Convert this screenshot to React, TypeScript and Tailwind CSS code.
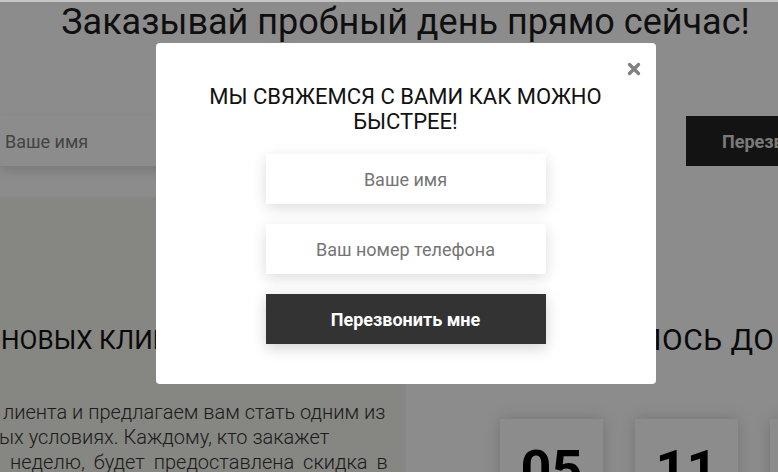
function Counter({ value }: { value: string }) {
  return (
    <div className="h-[200px] w-[103px] bg-white pt-[24px] text-center text-[54px] font-bold leading-[54px] text-black shadow-[0_0_15px_rgba(0,0,0,0.18)]">
      {value}
    </div>
  );
}

function CloseIcon() {
  return (
    <svg width="14" height="14" viewBox="0 0 14 14" className="text-[#808080]">
      <path d="M2.5 2.5 L11.5 11.5 M11.5 2.5 L2.5 11.5" stroke="currentColor" strokeWidth="3.4" strokeLinecap="round" />
    </svg>
  );
}

export default function App() {
  return (
    <div className="relative h-[472px] w-[778px] overflow-hidden bg-white font-['Roboto',sans-serif]">
      <div className="h-[2px] bg-[#c6c6c6]" />
      <div className="relative h-[470px] w-[811px]">
        <h1 className="pt-[1px] text-center text-[36px] leading-[39px] text-[#1c1c1c]">
          Заказывай пробный день прямо сейчас!
        </h1>

        <div className="mt-[74px] flex h-[50px]">
          <div className="flex w-[250px] items-center bg-white pl-[5px] text-[18px] text-[#7a7a7a] shadow-[0_6px_10px_rgba(0,0,0,0.12)]">
            Ваше имя
          </div>
          <div className="flex-1" />
          <div className="flex w-[125px] items-center overflow-hidden whitespace-nowrap bg-[#242424] pl-[36px] text-[18px] font-bold text-[#dedede]">
            Перезвонить мне
          </div>
        </div>

        <div className="mt-[31px] grid h-[275px] grid-cols-[406px_1fr]">
          <div className="overflow-hidden bg-[#f5f5ee] pt-[125px]">
            <h2 className="whitespace-nowrap pl-[1px] text-[26px] uppercase leading-[36px] text-[#111]">
              Новых клиентов
            </h2>
            <div className="mt-[42px] whitespace-nowrap text-[20px] font-light leading-[25px] text-[#333]">
              <div className="pl-[3px]">лиента и предлагаем вам стать одним из</div>
              <div className="-ml-[1px]">ых условиях. Каждому, кто закажет</div>
              <div className="pl-[10px] [word-spacing:4px]">неделю, будет предоставлена скидка в</div>
            </div>
          </div>
          <div className="pt-[125px]">
            <h2 className="ml-[156px] whitespace-nowrap text-[30px] uppercase leading-[36px] tracking-[0.5px] text-[#111]">
              Осталось до конца
            </h2>
            <div className="ml-[94px] mt-[61px] flex gap-[32px]">
              <Counter value="05" />
              <Counter value="11" />
              <Counter value="42" />
            </div>
          </div>
        </div>

        <div className="absolute inset-0 flex justify-center bg-black/45 pt-[41px]">
          <div className="relative h-fit w-[500px] rounded-[4px] bg-white pb-[40px] pt-[41px]">
            <button className="absolute right-[15px] top-[19px] flex h-[14px] w-[14px] items-center justify-center">
              <CloseIcon />
            </button>
            <h3 className="text-center text-[22px] leading-[25px] text-[#111]">
              МЫ СВЯЖЕМСЯ С ВАМИ КАК МОЖНО
              <br />
              БЫСТРЕЕ!
            </h3>
            <div className="mx-auto mt-[20px] flex w-[280px] flex-col gap-[20px]">
              <div className="flex h-[50px] items-center justify-center bg-white text-[18px] text-[#757575] shadow-[0_4px_14px_rgba(0,0,0,0.14)]">
                Ваше имя
              </div>
              <div className="flex h-[50px] items-center justify-center bg-white text-[18px] text-[#757575] shadow-[0_4px_14px_rgba(0,0,0,0.14)]">
                Ваш номер телефона
              </div>
              <div className="flex h-[50px] items-center justify-center bg-[#333333] text-[18px] font-bold text-white shadow-[0_4px_14px_rgba(0,0,0,0.18)]">
                Перезвонить мне
              </div>
            </div>
          </div>
        </div>
      </div>
    </div>
  );
}
